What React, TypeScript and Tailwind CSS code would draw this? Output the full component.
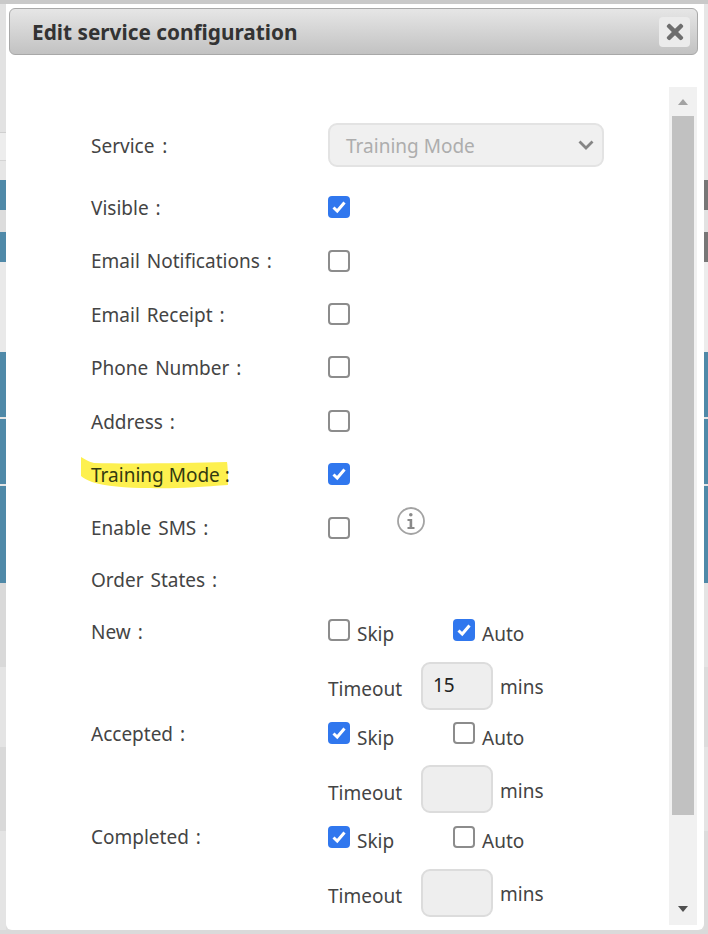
import { FaTimes } from 'react-icons/fa';

const leftStrip = [
  'h-[128px] bg-[#e2e2e2]',
  'h-[28px] bg-[#ededed] border-t border-[#cfcfcf]',
  'h-[20px] bg-[#e6e6e6] border-t border-[#d4d4d4]',
  'h-[30px] bg-[#4f89a8]',
  'h-[22px] bg-[#dcdcdc]',
  'h-[30px] bg-[#4f89a8]',
  'h-[90px] bg-[#e9e9e9]',
  'h-[65px] bg-[#4f89a8]',
  'h-[2px] bg-[#e6e6e6]',
  'h-[65px] bg-[#4f89a8]',
  'h-[2px] bg-[#e6e6e6]',
  'h-[97px] bg-[#4f89a8]',
  'h-[84px] bg-[#d9d9d9]',
  'h-[80px] bg-[#e4e4e4]',
  'h-[84px] bg-[#d9d9d9]',
  'h-[100px] bg-[#e4e4e4]',
];

const rightStrip = [
  'h-[176px] bg-[#e6e6e6]',
  'h-[30px] bg-[#777777]',
  'h-[22px] bg-[#e2e2e2]',
  'h-[30px] bg-[#777777]',
  'h-[90px] bg-[#ececec]',
  'h-[65px] bg-[#4f89a8]',
  'h-[2px] bg-[#e6e6e6]',
  'h-[65px] bg-[#4f89a8]',
  'h-[2px] bg-[#e6e6e6]',
  'h-[97px] bg-[#4f89a8]',
  'h-[84px] bg-[#e4e4e4]',
  'h-[80px] bg-[#dcdcdc]',
  'h-[84px] bg-[#e4e4e4]',
  'h-[100px] bg-[#dcdcdc]',
];

function Check({ checked = false }: { checked?: boolean }) {
  if (checked) {
    return (
      <span className="flex h-[22px] w-[22px] shrink-0 items-center justify-center rounded-[4px] bg-[#3077ee]">
        <svg width="18" height="18" viewBox="0 0 18 18" fill="none">
          <path d="M3.5 9.5L7.2 13L14.5 4.5" stroke="white" strokeWidth="3" />
        </svg>
      </span>
    );
  }
  return <span className="h-[22px] w-[22px] shrink-0 rounded-[4px] border-2 border-[#8c8c8c] bg-white" />;
}

function Row({ label, checked, children }: { label: string; checked?: boolean; children?: React.ReactNode }) {
  return (
    <div className="flex h-[53.4px] items-center">
      <div className="w-[237px] translate-y-[1px] [word-spacing:2px]">{label}</div>
      <Check checked={checked} />
      {children}
    </div>
  );
}

function StateGroup({ label, skip, auto, timeout, labelClass }: { label: string; skip?: boolean; auto?: boolean; timeout?: string; labelClass?: string }) {
  return (
    <div className="flex h-[103.5px] items-start">
      <div className={`h-[22px] w-[237px] leading-[22px] [word-spacing:2px] ${labelClass ?? ''}`}>{label}</div>
      <div className="flex flex-col">
        <div className="flex h-[22px] items-center">
          <div className="flex w-[125px] items-center">
            <Check checked={skip} />
            <span className="ml-[7px] translate-y-[5px]">Skip</span>
          </div>
          <Check checked={auto} />
          <span className="ml-[7px] translate-y-[5px]">Auto</span>
        </div>
        <div className="mt-[21px] flex h-[48px] items-center">
          <span className="w-[93px] translate-y-[4px]">Timeout</span>
          <div className="flex h-[48px] w-[72px] items-center rounded-[9px] border-2 border-[#dcdcdc] bg-[#eeeeee] pl-[10px] text-[#222222]">
            {timeout}
          </div>
          <span className="ml-[7px] translate-y-[2px]">mins</span>
        </div>
      </div>
    </div>
  );
}

function Scrollbar() {
  return (
    <div className="flex h-[838px] w-[28px] shrink-0 flex-col items-center bg-[#f1f1f1]">
      <svg className="mt-[11px]" width="12" height="8" viewBox="0 0 12 8">
        <polygon points="6,1 11,7 1,7" fill="#a3a3a3" />
      </svg>
      <div className="mt-[10px] h-[699px] w-[22px] bg-[#c1c1c1]" />
      <svg className="mt-[90px]" width="12" height="8" viewBox="0 0 12 8">
        <polygon points="1,1 11,1 6,7" fill="#505050" />
      </svg>
    </div>
  );
}

export default function App() {
  return (
    <div
      className="flex h-[934px] w-[708px] flex-col overflow-hidden bg-[#dedede] text-[19px] text-[#444444]"
      style={{ fontFamily: '"Noto Sans", sans-serif' }}
    >
      <div className="h-[4px] shrink-0 bg-[#c9c9c9]" />
      <div className="flex h-[926px] shrink-0">
        <div className="w-[6px] shrink-0">
          {leftStrip.map((c, i) => (
            <div key={i} className={c} />
          ))}
        </div>
        <div className="w-[698px] shrink-0 rounded-b-md bg-white">
          <div className="ml-[3px] mt-[4px] flex h-[47px] w-[689px] items-center justify-between rounded-[6px] border border-[#a8a8a8] bg-gradient-to-b from-[#e6e6e6] to-[#c2c2c2] pl-[22px] pr-[7px]">
            <span className="translate-y-[1px] text-[20.8px] font-bold text-[#333333]">Edit service configuration</span>
            <div className="flex h-[30px] w-[31px] items-center justify-center rounded-[4px] bg-[#ebebeb]">
              <FaTimes className="text-[#6e6e6e]" size={24} />
            </div>
          </div>
          <div className="mt-[32px] flex">
            <div className="w-[663px] pl-[85px] pt-[36px]">
              <div className="flex h-[44px] items-center">
                <div className="w-[237px] translate-y-[1px] [word-spacing:3px]">Service :</div>
                <div className="flex h-[44px] w-[276px] items-center justify-between rounded-[9px] border-2 border-[#e3e3e3] bg-[#f0f0f0] pl-[16px] pr-[7px] text-[#adadad]">
                  <span className="translate-y-[1px]">Training Mode</span>
                  <svg width="18" height="12" viewBox="0 0 18 12" fill="none">
                    <path d="M2.5 2.5L9 9L15.5 2.5" stroke="#858585" strokeWidth="2.8" />
                  </svg>
                </div>
              </div>
              <div className="mt-[13.5px]">
                <Row label="Visible :" checked />
                <Row label="Email Notifications :" />
                <Row label="Email Receipt :" />
                <Row label="Phone Number :" />
                <Row label="Address :" />
                <div className="flex h-[53.4px] items-center">
                  <div className="relative w-[237px] translate-y-[1px]">
                    <svg className="absolute left-[-11px] top-[-5px]" width="150" height="34" viewBox="0 0 150 34">
                      <path d="M1 1C5 3 9 6 14 7C50 8 110 7 147 6C148 12 148 24 148 29C120 31 90 33 70 32C45 32 25 30 12 26C7 24 3 22 1 20Z" fill="#fdf04f" />
                    </svg>
                    <span className="relative text-[#333a10]">Training Mode :</span>
                  </div>
                  <Check checked />
                </div>
                <Row label="Enable SMS :">
                  <svg className="ml-[46px] -translate-y-[7px]" width="30" height="30" viewBox="0 0 30 30" fill="none">
                    <circle cx="15" cy="15" r="13" stroke="#a3a3a3" strokeWidth="1.8" />
                    <rect x="13" y="7" width="3.6" height="3.6" rx="1.8" fill="#8a8a8a" />
                    <path d="M11.5 13H16.2V21H18.5V23H11.5V21H13.6V15H11.5Z" fill="#8a8a8a" />
                  </svg>
                </Row>
                <div className="flex h-[52.5px] items-center [word-spacing:2px]">Order States :</div>
              </div>
              <div className="mt-[12px]">
                <StateGroup label="New :" auto timeout="15" labelClass="translate-y-[2px]" />
                <StateGroup label="Accepted :" skip labelClass="translate-y-[1px]" />
                <StateGroup label="Completed :" skip />
              </div>
            </div>
            <Scrollbar />
          </div>
        </div>
        <div className="w-[4px] shrink-0">
          {rightStrip.map((c, i) => (
            <div key={i} className={c} />
          ))}
        </div>
      </div>
      <div className="h-[4px] shrink-0 bg-[#dadada]" />
    </div>
  );
}
